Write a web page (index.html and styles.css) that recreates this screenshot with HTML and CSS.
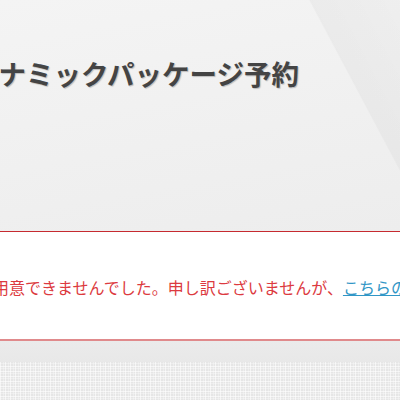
FILE: index.html
```html
<!DOCTYPE html>
<html lang="ja">
<head>
<meta charset="utf-8">
<link rel="stylesheet" href="styles.css">
</head>
<body>
<header class="hero">
  <h1 class="title">ダイナミックパッケージ予約</h1>
</header>
<section class="notice">
  <p class="message">ご用意できませんでした。申し訳ございませんが、<a class="link" href="#">こちらのページ</a>からお探しください。</p>
</section>
<div class="spacer"></div>
<div class="texture"></div>
</body>
</html>
```

FILE: styles.css
```css
html, body {
  margin: 0;
  padding: 0;
}
body {
  width: 400px;
  height: 400px;
  overflow: hidden;
  background: #e9e9e9;
  font-family: "Noto Sans CJK JP", "Noto Sans", sans-serif;
}
.hero {
  height: 231px;
  box-sizing: border-box;
  padding-top: 52px;
  background:
    linear-gradient(62deg, rgba(0,0,0,0) 0, rgba(0,0,0,0) 82.5%, rgba(0,0,0,0.03) 82.8%, rgba(0,0,0,0.015) 100%),
    linear-gradient(170deg, #f4f4f4 0%, #ededed 100%);
  overflow: hidden;
}
.title {
  margin: 0 0 0 -56px;
  white-space: nowrap;
  font-size: 27.5px;
  line-height: 42px;
  font-weight: 700;
  color: #444444;
  text-shadow: 1px 1px 1px rgba(0,0,0,0.22);
}
.notice {
  height: 104px;
  padding-top: 3px;
  background: #ffffff;
  border-top: 1px solid #c62a30;
  border-bottom: 2px solid #e08a8c;
  display: flex;
  align-items: center;
  overflow: hidden;
}
.message {
  margin: 0 0 0 -23px;
  white-space: nowrap;
  font-size: 16px;
  line-height: 24px;
  color: #dc3a40;
}
.link {
  color: #3096c6;
  text-decoration: underline;
}
.spacer {
  height: 21px;
  background: linear-gradient(180deg, #ebebeb, #e8e8e8);
}
.texture {
  height: 40px;
  background-color: #e6e6e6;
  background-image:
    repeating-linear-gradient(90deg, rgba(255,255,255,0.6) 0 1px, transparent 1px 3px, rgba(255,255,255,0.3) 3px 4px, transparent 4px 5px),
    repeating-linear-gradient(0deg, rgba(255,255,255,0.6) 0 1px, transparent 1px 3px, rgba(255,255,255,0.3) 3px 4px, transparent 4px 5px);
}
```
